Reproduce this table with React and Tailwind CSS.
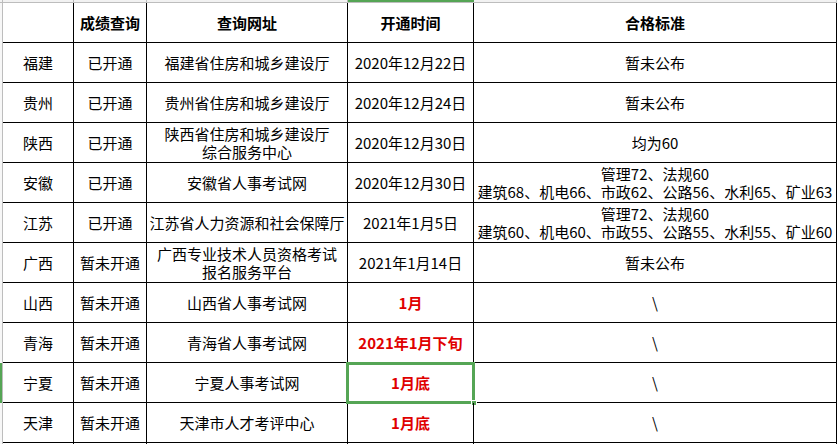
const cols = ['成绩查询', '查询网址', '开通时间', '合格标准']

const rows = [
  { name: '福建', status: '已开通', site: ['福建省住房和城乡建设厅'], time: '2020年12月22日', std: ['暂未公布'] },
  { name: '贵州', status: '已开通', site: ['贵州省住房和城乡建设厅'], time: '2020年12月24日', std: ['暂未公布'] },
  { name: '陕西', status: '已开通', site: ['陕西省住房和城乡建设厅', '综合服务中心'], time: '2020年12月30日', std: ['均为60'] },
  {
    name: '安徽',
    status: '已开通',
    site: ['安徽省人事考试网'],
    time: '2020年12月30日',
    std: ['管理72、法规60', '建筑68、机电66、市政62、公路56、水利65、矿业63'],
  },
  {
    name: '江苏',
    status: '已开通',
    site: ['江苏省人力资源和社会保障厅'],
    time: '2021年1月5日',
    std: ['管理72、法规60', '建筑60、机电60、市政55、公路55、水利55、矿业60'],
  },
  { name: '广西', status: '暂未开通', site: ['广西专业技术人员资格考试', '报名服务平台'], time: '2021年1月14日', std: ['暂未公布'] },
  { name: '山西', status: '暂未开通', site: ['山西省人事考试网'], time: '1月', std: ['\\'], red: true },
  { name: '青海', status: '暂未开通', site: ['青海省人事考试网'], time: '2021年1月下旬', std: ['\\'], red: true },
  { name: '宁夏', status: '暂未开通', site: ['宁夏人事考试网'], time: '1月底', std: ['\\'], red: true, selected: true },
  { name: '天津', status: '暂未开通', site: ['天津市人才考评中心'], time: '1月底', std: ['\\'], red: true },
]

const cell = 'h-[40px] border-r border-b border-black flex flex-col items-center justify-center text-center whitespace-nowrap'

// two-line cells: each line in its own 18px block
function Lines({ lines }) {
  if (lines.length === 1) return lines[0]
  return lines.map((l, i) => (
    <div key={i} className="h-[18px] leading-[18px]">
      {l}
    </div>
  ))
}

export default function App() {
  return (
    <div
      className="w-[837px] h-[444px] overflow-hidden bg-white text-black text-[15px] leading-[18px]"
      style={{ fontFamily: '"Noto Sans CJK SC", "Noto Sans", sans-serif' }}
    >
      <div className="grid grid-cols-[3px_71px_73px_201px_126px_363px]">
        {/* spreadsheet column header strip */}
        <div className="h-[3px] bg-[#f2f2f2] border-r border-b border-[#bdbdbd]" />
        <div className="h-[3px] bg-[#f2f2f2] border-r border-b border-[#bdbdbd]" />
        <div className="h-[3px] bg-[#f2f2f2] border-r border-b border-[#bdbdbd]" />
        <div className="h-[3px] bg-[#f2f2f2] border-r border-b border-[#bdbdbd]" />
        <div className="h-[3px] bg-[#55a555] border-b border-[#bdbdbd]" />
        <div className="h-[3px] bg-[#f2f2f2] border-r border-b border-[#bdbdbd]" />

        {/* header */}
        <div className="h-[40px] bg-[#f7f7f7] border-r border-[#bdbdbd]" />
        <div className={cell} />
        {cols.map((c) => (
          <div key={c} className={`${cell} font-bold`}>
            {c}
          </div>
        ))}

        {rows.map((r) => (
          <div key={r.name} className="contents">
            <div className={`h-[40px] border-r border-[#bdbdbd] ${r.selected ? 'bg-[#55a555]' : 'bg-[#f7f7f7]'}`} />
            <div className={cell}>{r.name}</div>
            <div className={cell}>{r.status}</div>
            <div className={cell}>
              <Lines lines={r.site} />
            </div>
            <div className={`${cell} relative ${r.red ? 'text-[#e00000] font-bold' : ''}`}>
              {r.time}
              {r.selected && (
                <div className="absolute left-[-2px] top-[-1px] w-[129px] h-[42px] border-[3px] border-[#55a555]">
                  <div className="absolute right-[-5px] bottom-[-5px] w-[6px] h-[6px] bg-[#55a555] border border-white" />
                </div>
              )}
            </div>
            <div className={cell}>
              <Lines lines={r.std} />
            </div>
          </div>
        ))}

        {/* next row, cut off */}
        <div className="h-[40px] bg-[#f7f7f7] border-r border-[#bdbdbd]" />
        <div className={cell} />
        <div className={cell} />
        <div className={cell} />
        <div className={cell} />
        <div className={cell} />
      </div>
    </div>
  )
}
